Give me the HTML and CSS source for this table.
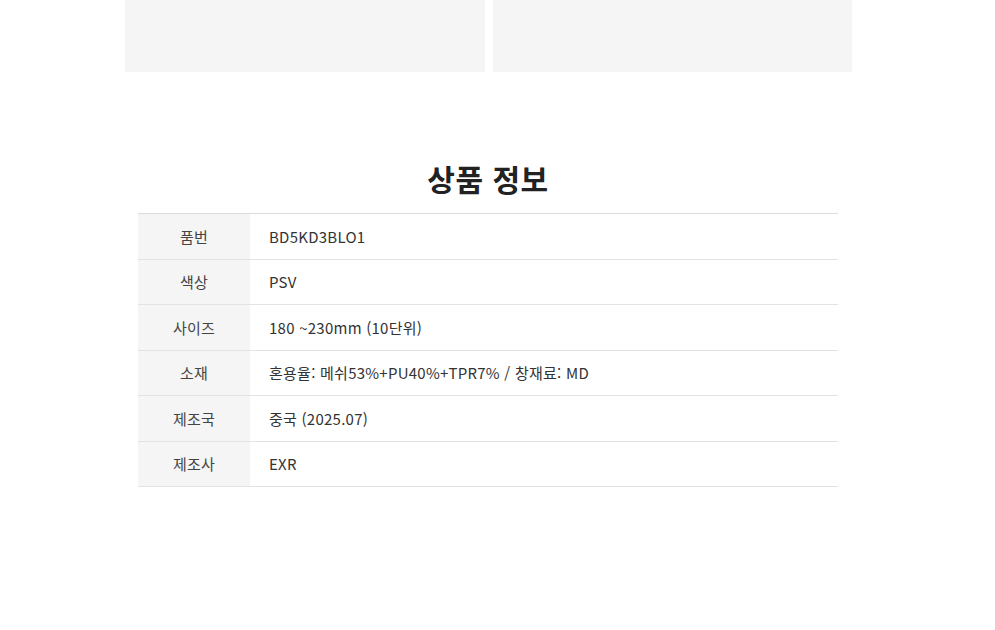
FILE: index.html
```html
<!DOCTYPE html>
<html lang="ko">
<head>
<meta charset="utf-8">
<link rel="stylesheet" href="styles.css">
</head>
<body>
<div class="page">
  <div class="gallery">
    <div class="thumb"></div>
    <div class="thumb"></div>
  </div>
  <section class="info">
    <h2 class="info-title">상품 정보</h2>
    <table class="info-table">
      <tr><th>품번</th><td>BD5KD3BLO1</td></tr>
      <tr><th>색상</th><td>PSV</td></tr>
      <tr><th>사이즈</th><td>180 ~230mm (10단위)</td></tr>
      <tr><th>소재</th><td>혼용율: 메쉬53%+PU40%+TPR7% / 창재료: MD</td></tr>
      <tr><th>제조국</th><td>중국 (2025.07)</td></tr>
      <tr><th>제조사</th><td>EXR</td></tr>
    </table>
  </section>
</div>
</body>
</html>
```
FILE: styles.css
```css
html, body {
  margin: 0;
  padding: 0;
  background: #fff;
  font-family: "Noto Sans CJK KR", "Noto Sans", sans-serif;
  color: #333;
}
.page {
  width: 995px;
}
.gallery {
  display: flex;
  gap: 8px;
  margin-left: 125px;
}
.thumb {
  width: 359.5px;
  height: 72px;
  background: #f5f5f5;
}
.info {
  width: 700px;
  margin-left: 138px;
  padding-top: 86px;
}
.info-title {
  margin: 0 0 15px;
  text-align: center;
  font-size: 30px;
  line-height: 40px;
  font-weight: 700;
  color: #222;
  letter-spacing: 0.5px;
}
.info-table {
  width: 100%;
  border-collapse: collapse;
  border-top: 1px solid #dcdcdc;
  font-size: 15px;
}
.info-table tr {
  height: 45.5px;
  border-bottom: 1px solid #e3e3e3;
}
.info-table th {
  width: 112px;
  background: #f5f5f5;
  font-weight: 400;
  color: #444;
  text-align: center;
  padding: 0;
  letter-spacing: 0.2px;
}
.info-table td {
  padding: 0 0 0 19px;
  color: #333;
  text-align: left;
  letter-spacing: 0.25px;
}
```
